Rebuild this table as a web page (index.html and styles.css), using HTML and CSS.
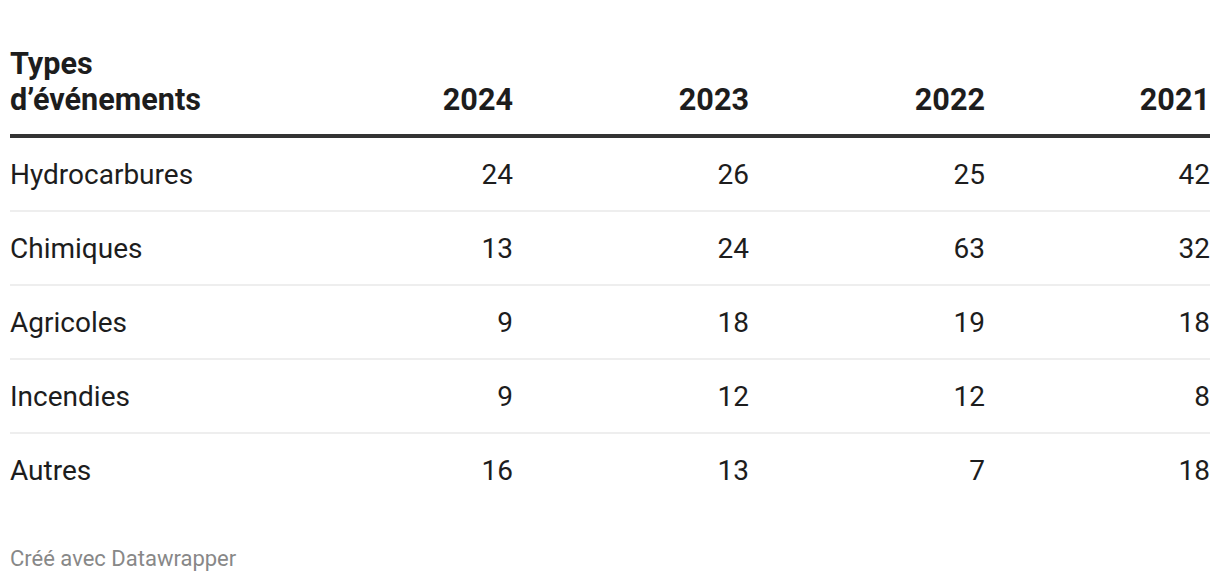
FILE: index.html
```html
<!DOCTYPE html>
<html lang="fr">
<head>
<meta charset="utf-8">
<title>Types d'événements</title>
<link rel="stylesheet" href="styles.css">
</head>
<body>
<div class="chart">
  <table class="dw-table">
    <colgroup>
      <col class="c-label">
      <col class="c-num">
      <col class="c-num">
      <col class="c-num">
      <col class="c-last">
    </colgroup>
    <thead>
      <tr>
        <th class="label">Types<br>d’événements</th>
        <th class="num">2024</th>
        <th class="num">2023</th>
        <th class="num">2022</th>
        <th class="num last">2021</th>
      </tr>
    </thead>
    <tbody>
      <tr><td class="label">Hydrocarbures</td><td class="num">24</td><td class="num">26</td><td class="num">25</td><td class="num last">42</td></tr>
      <tr><td class="label">Chimiques</td><td class="num">13</td><td class="num">24</td><td class="num">63</td><td class="num last">32</td></tr>
      <tr><td class="label">Agricoles</td><td class="num">9</td><td class="num">18</td><td class="num">19</td><td class="num last">18</td></tr>
      <tr><td class="label">Incendies</td><td class="num">9</td><td class="num">12</td><td class="num">12</td><td class="num last">8</td></tr>
      <tr><td class="label">Autres</td><td class="num">16</td><td class="num">13</td><td class="num">7</td><td class="num last">18</td></tr>
    </tbody>
  </table>
  <div class="footer">Créé avec Datawrapper</div>
</div>
</body>
</html>
```

FILE: styles.css
```css
html, body {
  margin: 0;
  padding: 0;
  background: #ffffff;
}

body {
  font-family: Roboto, "Liberation Sans", sans-serif;
  color: #1d1d1d;
}

.chart {
  padding: 46px 10px 0 10px;
}

.dw-table {
  width: 1200px;
  border-collapse: collapse;
  table-layout: fixed;
  font-size: 28px;
  line-height: 36px;
}

.c-label { width: 277px; }
.c-num { width: 236px; }
.c-last { width: 215px; }

th, td {
  padding: 0 10px 0 0;
  font-weight: 400;
}

th.last, td.last {
  padding-right: 0;
}

thead th {
  font-size: 30.6px;
  font-weight: 700;
  vertical-align: bottom;
  padding-bottom: 16px;
  border-bottom: 4px solid #333333;
  color: #1d1d1d;
}

.label {
  text-align: left;
}

.num {
  text-align: right;
}

tbody td {
  height: 70px;
  vertical-align: middle;
  border-bottom: 2px solid #eeeeee;
  padding-top: 2px;
  padding-bottom: 0;
}

tbody tr:last-child td {
  border-bottom: none;
}

.footer {
  margin-top: 38px;
  font-size: 22px;
  line-height: 30px;
  color: #888888;
}
```
